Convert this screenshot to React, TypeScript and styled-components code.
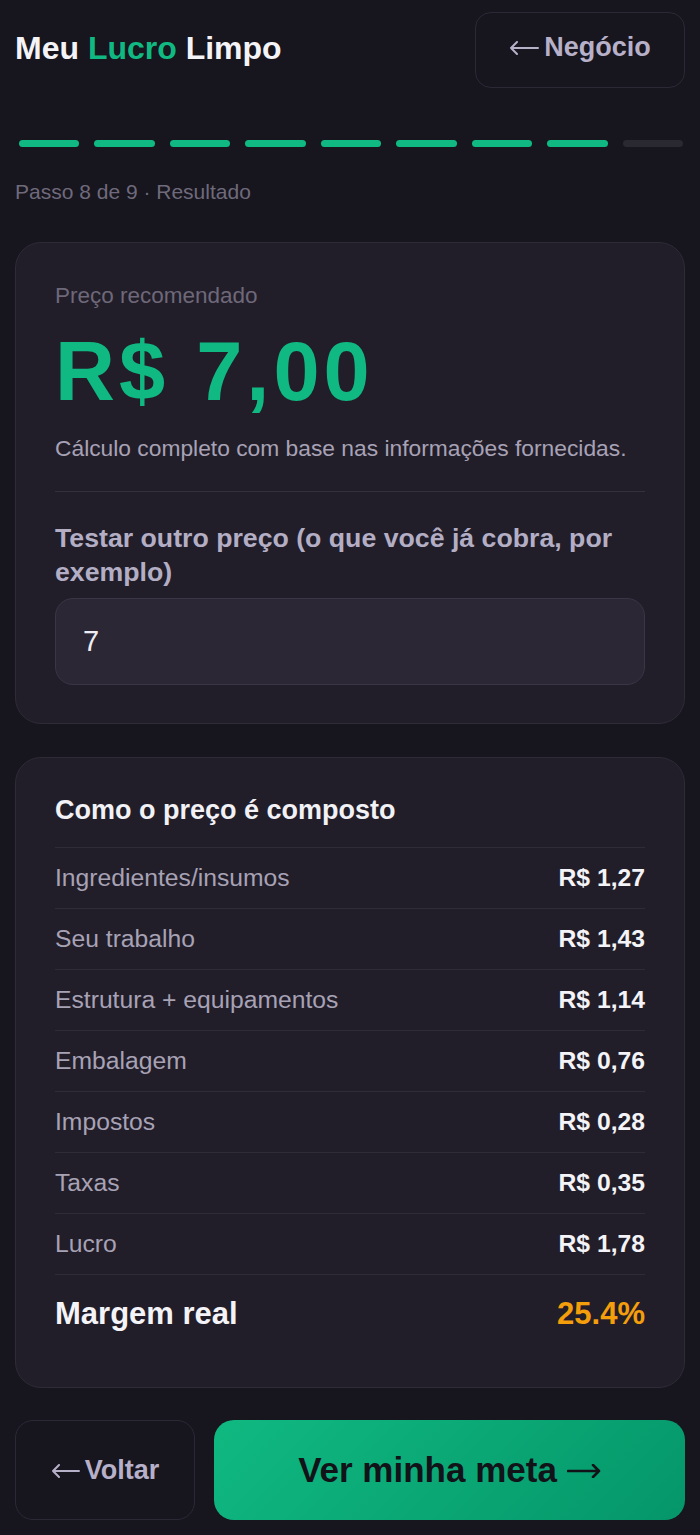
import styled, { createGlobalStyle } from 'styled-components';

const GlobalStyle = createGlobalStyle`
    html, body {
        margin: 0;
        padding: 0;
        background: #17151e;
    }

    body {
        font-family: 'Liberation Sans', Arial, sans-serif;
        color: #ecebf1;
    }
`;

const breakdown = [
    { label: 'Ingredientes/insumos', value: 'R$ 1,27' },
    { label: 'Seu trabalho', value: 'R$ 1,43' },
    { label: 'Estrutura + equipamentos', value: 'R$ 1,14' },
    { label: 'Embalagem', value: 'R$ 0,76' },
    { label: 'Impostos', value: 'R$ 0,28' },
    { label: 'Taxas', value: 'R$ 0,35' },
    { label: 'Lucro', value: 'R$ 1,78' },
];

const TOTAL_STEPS = 9;
const CURRENT_STEP = 8;

function Arrow({ dir, width, stroke = 2 }: { dir: 'left' | 'right'; width: number; stroke?: number }) {
    const h = 14;
    const d = dir === 'left' ? `M${width - 1} 7H2M8 1L2 7l6 6` : `M1 7H${width - 2}M${width - 8} 1l6 6-6 6`;
    return (
        <ArrowSvg width={width} height={h} viewBox={`0 0 ${width} ${h}`} $dir={dir}>
            <path d={d} fill="none" stroke="currentColor" strokeWidth={stroke} strokeLinecap="round" strokeLinejoin="round" />
        </ArrowSvg>
    );
}

export default function App() {
    return (
        <>
            <GlobalStyle />
            <Page>
                <Header>
                    <Brand>
                        Meu <BrandAccent>Lucro</BrandAccent> Limpo
                    </Brand>
                    <GhostButton $size="header">
                        <Arrow dir="left" width={30} />
                        Negócio
                    </GhostButton>
                </Header>

                <Progress>
                    {Array.from({ length: TOTAL_STEPS }).map((_, i) => (
                        <Segment key={i} $done={i < CURRENT_STEP} />
                    ))}
                </Progress>

                <StepLabel>Passo 8 de 9 · Resultado</StepLabel>

                <Card $pad="result">
                    <Eyebrow>Preço recomendado</Eyebrow>
                    <BigPrice>R$ 7,00</BigPrice>
                    <Note>Cálculo completo com base nas informações fornecidas.</Note>
                    <Divider />
                    <FieldLabel htmlFor="price">Testar outro preço (o que você já cobra, por exemplo)</FieldLabel>
                    <PriceInput id="price" defaultValue="7" inputMode="decimal" />
                </Card>

                <Card $pad="breakdown">
                    <CardTitle>Como o preço é composto</CardTitle>
                    <Rows>
                        {breakdown.map((row) => (
                            <Row key={row.label}>
                                <RowLabel>{row.label}</RowLabel>
                                <RowValue>{row.value}</RowValue>
                            </Row>
                        ))}
                        <Row $total>
                            <TotalLabel>Margem real</TotalLabel>
                            <TotalValue>25.4%</TotalValue>
                        </Row>
                    </Rows>
                </Card>

                <Actions>
                    <GhostButton $size="footer">
                        <Arrow dir="left" width={29} />
                        Voltar
                    </GhostButton>
                    <PrimaryButton>
                        Ver minha meta
                        <Arrow dir="right" width={34} stroke={2.6} />
                    </PrimaryButton>
                </Actions>
            </Page>
        </>
    );
}

const Page = styled.main`
    width: 700px;
    min-height: 1535px;
    box-sizing: border-box;
    padding: 12px 15px 0;
    display: flex;
    flex-direction: column;
`;

const Header = styled.header`
    display: flex;
    align-items: center;
    justify-content: space-between;
    height: 76px;
`;

const Brand = styled.h1`
    margin: 0 0 4px;
    font-size: 32px;
    line-height: 36px;
    font-weight: 700;
    color: #f4f3f7;
`;

const BrandAccent = styled.span`
    color: #10b981;
`;

const ArrowSvg = styled.svg<{ $dir: 'left' | 'right' }>`
    flex-shrink: 0;
    margin: ${({ $dir }) => ($dir === 'left' ? '2px 5px 0 0' : '2px 0 0 10px')};
`;

const GhostButton = styled.button<{ $size: 'header' | 'footer' }>`
    display: flex;
    align-items: center;
    justify-content: center;
    font-family: 'Liberation Sans', Arial, sans-serif;
    font-weight: 700;
    color: #b7b0c9;
    background: transparent;
    border: 1px solid #2c2936;
    cursor: pointer;
    padding: 0 0 ${({ $size }) => ($size === 'header' ? '6px' : '0')};
    border-radius: ${({ $size }) => ($size === 'header' ? '16px' : '18px')};
    font-size: 27px;
    width: ${({ $size }) => ($size === 'header' ? '210px' : '180px')};
    height: ${({ $size }) => ($size === 'header' ? '76px' : '100px')};
    flex-shrink: 0;
`;

const Progress = styled.div`
    display: grid;
    grid-template-columns: repeat(${TOTAL_STEPS}, 1fr);
    gap: 15px;
    margin: 52px 2px 0 4px;
`;

const Segment = styled.span<{ $done: boolean }>`
    height: 7px;
    border-radius: 4px;
    background: ${({ $done }) => ($done ? '#10b981' : '#2a2831')};
`;

const StepLabel = styled.p`
    margin: 33px 0 0;
    font-size: 21px;
    line-height: 24px;
    color: #6f6a7b;
`;

const Card = styled.section<{ $pad: 'result' | 'breakdown' }>`
    background: #211e2a;
    border: 1px solid #2e2b37;
    border-radius: 26px;
    box-sizing: border-box;
    padding: ${({ $pad }) => ($pad === 'result' ? '40px 39px 38px' : '34px 39px 35px')};
    margin-top: ${({ $pad }) => ($pad === 'result' ? '38px' : '33px')};
    display: flex;
    flex-direction: column;
`;

const Eyebrow = styled.div`
    font-size: 22.5px;
    line-height: 26px;
    color: #6e6879;
`;

const BigPrice = styled.div`
    margin-top: 18px;
    font-size: 83px;
    line-height: 90px;
    font-weight: 700;
    color: #10b981;
    letter-spacing: 4px;
`;

const Note = styled.p`
    margin: 18px 0 0;
    font-size: 22.8px;
    line-height: 26px;
    color: #a8a2b5;
`;

const Divider = styled.hr`
    margin: 30px 0 0;
    border: 0;
    border-top: 1px solid #34313d;
`;

const FieldLabel = styled.label`
    margin-top: 29px;
    font-size: 26.7px;
    line-height: 34px;
    font-weight: 700;
    color: #b4aec5;
`;

const PriceInput = styled.input`
    margin-top: 9px;
    height: 87px;
    box-sizing: border-box;
    padding: 0 27px;
    background: #2b2735;
    border: 1px solid #3a3645;
    border-radius: 18px;
    font-family: 'Liberation Sans', Arial, sans-serif;
    font-size: 29px;
    color: #eeedf3;
    outline: none;
`;

const CardTitle = styled.h2`
    margin: 0;
    font-size: 27px;
    font-weight: 700;
    color: #f2f1f6;
    line-height: 36px;
`;

const Rows = styled.div`
    margin-top: 19px;
    display: flex;
    flex-direction: column;
`;

const Row = styled.div<{ $total?: boolean }>`
    display: flex;
    align-items: center;
    justify-content: space-between;
    height: ${({ $total }) => ($total ? '78px' : '61px')};
    border-top: 1px solid #2f2c38;
    box-sizing: border-box;
`;

const RowLabel = styled.span`
    font-size: 24.7px;
    color: #a8a2b5;
`;

const RowValue = styled.span`
    font-size: 24.7px;
    font-weight: 700;
    color: #f4f3f7;
`;

const TotalLabel = styled.span`
    font-size: 31px;
    font-weight: 700;
    color: #f4f3f7;
`;

const TotalValue = styled.span`
    font-size: 31px;
    font-weight: 700;
    color: #f59e0b;
`;

const Actions = styled.div`
    display: flex;
    gap: 19px;
    margin-top: 32px;
`;

const PrimaryButton = styled.button`
    flex: 1;
    height: 100px;
    border: 0;
    border-radius: 20px;
    background: linear-gradient(135deg, #10b981 0%, #059669 100%);
    font-family: 'Liberation Sans', Arial, sans-serif;
    font-size: 35px;
    font-weight: 700;
    color: #121219;
    cursor: pointer;
    display: flex;
    align-items: center;
    justify-content: center;
`;
